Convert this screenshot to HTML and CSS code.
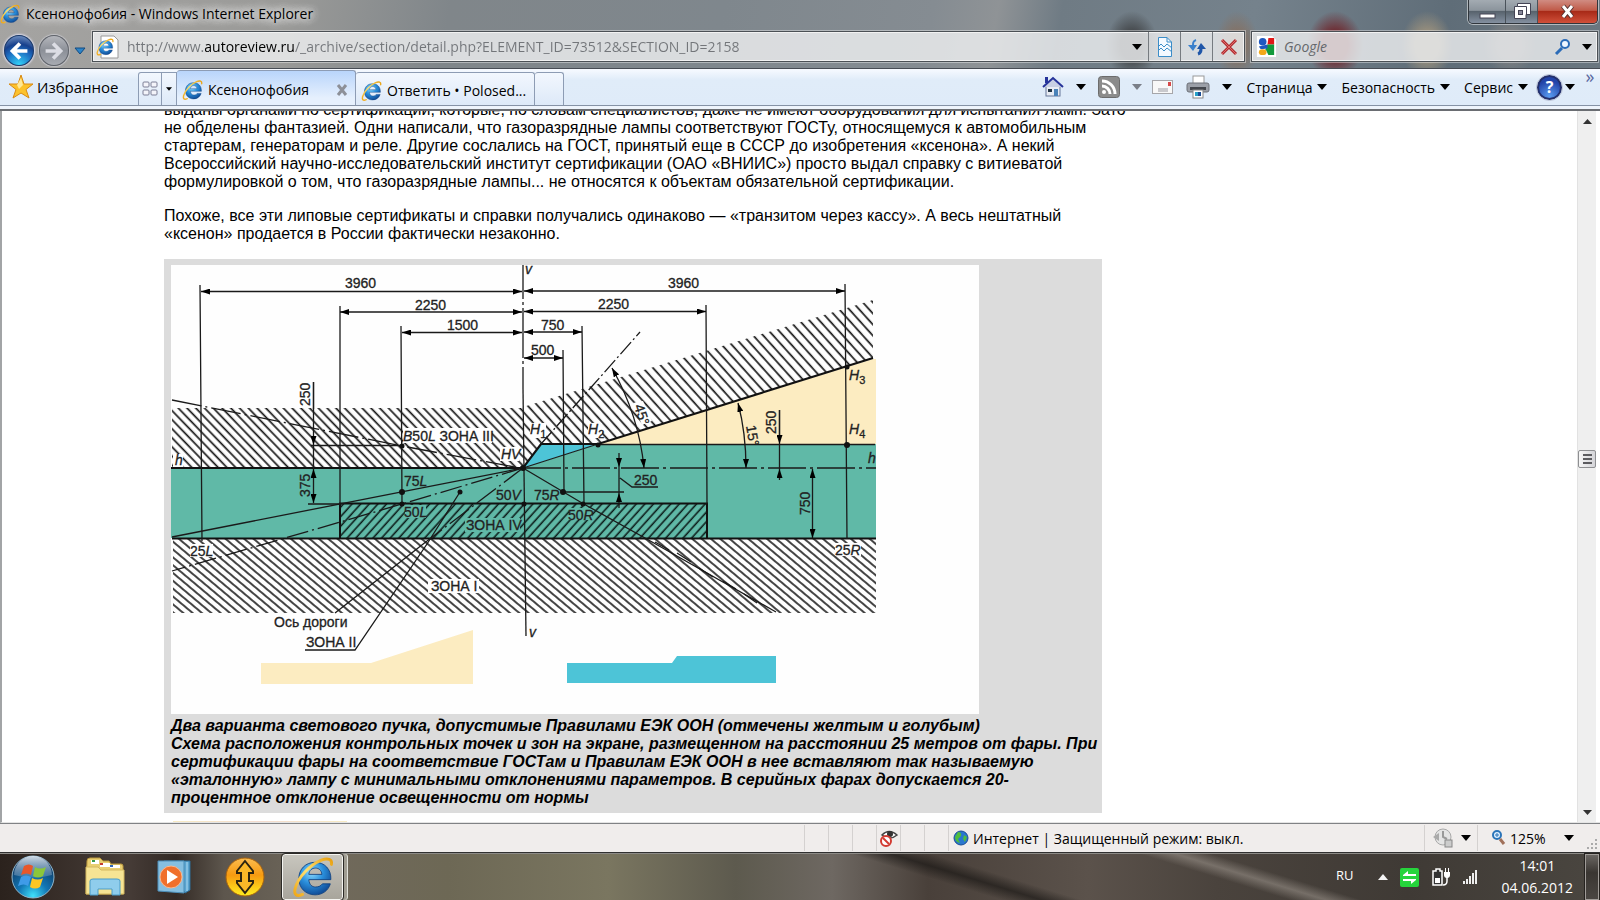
FILE: index.html
```html
<!DOCTYPE html>
<html lang="ru">
<head>
  <meta charset="UTF-8">
  <title>Ксенонофобия</title>
  <link rel="stylesheet" href="styles.css">
</head>
<body>
  <!-- shared icons -->
  <svg class="defs" aria-hidden="true">
    <defs>
      <radialGradient id="ieBlue" cx="0.4" cy="0.3" r="0.8">
        <stop offset="0" stop-color="#8fdcff"/>
        <stop offset="0.45" stop-color="#2a8fdc"/>
        <stop offset="1" stop-color="#0b3c86"/>
      </radialGradient>
      <linearGradient id="ieGold" x1="0" y1="1" x2="1" y2="0">
        <stop offset="0" stop-color="#f0a818"/>
        <stop offset="0.5" stop-color="#ffe070"/>
        <stop offset="1" stop-color="#e8a010"/>
      </linearGradient>
      <symbol id="ie" viewBox="0 0 40 40">
        <path fill="url(#ieBlue)" stroke="#0d3f80" stroke-width="0.8" d="M37 22.500 H16 C16.500 27.500 19 29.500 22.500 29.500 C25.500 29.500 27.500 28.500 29 26.500 H36.500 C34.500 33 29 37 22 37 C13 37 6.500 30.500 6.500 21.500 C6.500 12.500 13 6 22 6 C31 6 37.500 12.500 37 22.500 Z M16 17.500 H28.500 C28 13.500 25.500 11.500 22.300 11.500 C19 11.500 16.500 13.500 16 17.500 Z"/>
        <path fill="none" stroke="url(#ieGold)" stroke-width="2.800" stroke-linecap="round" d="M37.500 8 C38.500 3 34 1.500 28 4 C17 8.500 6 20 3 31 C1.500 37 4.500 39 10 36.500"/>
      </symbol>
      <symbol id="down" viewBox="0 0 10 6"><path fill="currentColor" d="M0 0 H10 L5 6 Z"/></symbol>
    </defs>
  </svg>

  <header class="glass">
    <div class="titlebar">
      <svg class="icon-18"><use href="#ie"/></svg>
      <h1>Ксенонофобия - Windows Internet Explorer</h1>
      <div class="window-buttons">
        <button aria-label="Свернуть"><svg width="36" height="23"><rect x="11" y="14" width="15" height="4" fill="#fff" stroke="#445" /></svg></button>
        <button aria-label="Восстановить"><svg width="31" height="23"><path d="M11.500 3.500 H24.500 V14.500 H20 V18.500 H8.500 V6.500 H11.500 Z" fill="#fff" stroke="#445"/><path d="M11.500 6.500 H20.500 V14.500" fill="none" stroke="#445"/><rect x="12.500" y="10.500" width="4" height="4" fill="#889" stroke="#445"/></svg></button>
        <button class="close" aria-label="Закрыть"><svg width="59" height="23"><path d="M25 6 L34 17 M34 6 L25 17" stroke="#533" stroke-width="5"/><path d="M25 6 L34 17 M34 6 L25 17" stroke="#fff" stroke-width="3"/></svg></button>
      </div>
    </div>

    <div class="address-row">
      <div class="nav">
        <button class="nav-back" aria-label="Назад"><svg viewBox="0 0 30 30"><path d="M16 7 L8 15 L16 23 M8 15 H24" fill="none" stroke="#fff" stroke-width="4"/></svg></button>
        <button class="nav-forward" aria-label="Вперед"><svg viewBox="0 0 30 30"><path d="M14 7 L22 15 L14 23 M22 15 H6" fill="none" stroke="#dcdde4" stroke-width="4"/></svg></button>
        <button class="nav-list" aria-label="Последние страницы"><svg width="12" height="8"><path d="M1 1 H11 L6 7 Z" fill="#2d84c8" stroke="#124a80"/></svg></button>
      </div>
      <form class="address">
        <svg class="page-icon" viewBox="0 0 24 24"><path d="M5 1 H18 L22 5 V23 H5 Z" fill="#fff" stroke="#999"/><use href="#ie" x="0" y="3" width="18" height="18"/></svg>
        <input class="url" type="text" aria-label="Адрес" value="http://www.autoreview.ru/_archive/section/detail.php?ELEMENT_ID=73512&amp;SECTION_ID=2158">
        <button type="button" class="plain" aria-label="Показать адреса"><svg class="tri"><use href="#down"/></svg></button>
        <button type="button" aria-label="Режим совместимости"><svg width="18" height="22"><path d="M2.500 1.500 H11 L15.500 6 V20.500 H2.500 Z" fill="#f4f9ff" stroke="#3b8dc8"/><path d="M11 1.500 V6 H15.500" fill="none" stroke="#3b8dc8"/><path d="M2 11 L5 8 L8 11 L11 8 L16 12" fill="none" stroke="#3b8dc8"/><path d="M2 15 L5 12 L8 15 L11 12 L16 16" fill="none" stroke="#3b8dc8"/></svg></button>
        <button type="button" aria-label="Обновить"><svg width="18" height="20"><path d="M8 3 C5 4 5 6 5 9" fill="none" stroke="#3a80cc" stroke-width="2"/><path d="M0 8 H9 L5 14 Z" fill="#3a80cc"/><path d="M10 17 C13 16 13 14 13 11" fill="none" stroke="#1f56a8" stroke-width="3"/><path d="M9 12 H18 L13 6 Z" fill="#1f56a8"/></svg></button>
        <button type="button" aria-label="Остановить"><svg width="18" height="18"><path d="M2 2 L16 16 M16 2 L2 16" stroke="#b22c30" stroke-width="3"/><path d="M2 2 L16 16 M16 2 L2 16" stroke="#de6a68"/></svg></button>
      </form>
      <form class="search">
        <svg class="google" viewBox="0 0 22 22"><path d="M1 0 H17 L21 4 V22 H1 Z" fill="#fff"/><path d="M13 2 H19 V9 H12 Z" fill="#e01818"/><path d="M12 9 H19 V20 H13 L10 14 Z" fill="#129a3c"/><circle cx="7" cy="6" r="4" fill="#1d57c0"/><path d="M3 11 L12 9 V13 L5 14 Z" fill="#1d57c0"/><ellipse cx="7" cy="17" rx="4" ry="3" fill="#f2a818"/></svg>
        <input type="text" aria-label="Поиск" placeholder="Google">
        <button type="button" class="plain" aria-label="Искать"><svg width="18" height="18"><circle cx="11" cy="6" r="4" fill="#eef6ff" stroke="#2b6cb8" stroke-width="2"/><path d="M8 10 L2 16" stroke="#2b6cb8" stroke-width="3"/></svg></button>
        <button type="button" class="plain" aria-label="Поставщики поиска"><svg class="tri"><use href="#down"/></svg></button>
      </form>
    </div>
  </header>

  <div class="toolbar">
    <button class="favorites">
      <svg width="26" height="26"><path d="M13 1 L16 10 L25 10 L18 15.500 L21 24 L13 19 L5 24 L8 15.500 L1 10 L10 10 Z" fill="#fcc22c" stroke="#d88a14"/><path d="M13 4 L15 11 L11 15 L9 11 Z" fill="#ffe898"/></svg>
      Избранное
    </button>
    <nav class="tabs">
      <button class="quick" aria-label="Быстрые вкладки"><svg width="16" height="16" fill="#f4f4fa" stroke="#7c7f96"><rect x="1" y="1" width="6" height="5" rx="1"/><rect x="9" y="1" width="6" height="5" rx="1"/><rect x="1" y="9" width="6" height="5" rx="1"/><rect x="9" y="9" width="6" height="5" rx="1"/></svg></button>
      <button class="quick-list" aria-label="Список вкладок"><svg width="6" height="4"><use href="#down"/></svg></button>
      <a class="tab active" href="#article"><svg class="icon-20"><use href="#ie"/></svg><span>Ксенонофобия</span><svg class="tab-close" width="12" height="12"><path d="M2 1 L10 11 M10 1 L2 11" stroke="#8d9098" stroke-width="3"/></svg></a>
      <a class="tab" href="#reply"><svg class="icon-20"><use href="#ie"/></svg><span>Ответить • Polosed...</span></a>
      <a class="tab new" href="#new" aria-label="Новая вкладка"></a>
    </nav>
    <div class="commands">
      <button aria-label="Домой"><svg width="22" height="22"><rect x="4" y="10" width="14" height="10" fill="#e8ecf4" stroke="#667799"/><path d="M1 11 L11 2 L21 11" fill="#c8d0e4" stroke="#26339a" stroke-width="2"/><rect x="3" y="1" width="3" height="6" fill="#26339a"/><rect x="6" y="13" width="4" height="3" fill="#234"/><rect x="12" y="13" width="4" height="7" fill="#4a82b8"/></svg></button>
      <button aria-label="Меню домашней страницы"><svg class="tri"><use href="#down"/></svg></button>
      <button aria-label="Каналы"><svg width="22" height="22"><rect x="0.500" y="0.500" width="21" height="21" rx="3" fill="#8b8b8b" stroke="#6c6c6c"/><circle cx="6" cy="16" r="2" fill="#fff"/><path d="M4 10 A8 8 0 0 1 12 18 M4 5 A13 13 0 0 1 17 18" fill="none" stroke="#fff" stroke-width="3"/></svg></button>
      <button class="off" aria-label="Меню каналов"><svg class="tri"><use href="#down"/></svg></button>
      <button aria-label="Почта"><svg class="mail" width="22" height="15"><rect x="0.500" y="0.500" width="20" height="13" fill="#f8f8f8" stroke="#a6a6aa"/><rect x="16" y="2" width="3" height="4" fill="#d84848"/><path d="M6 9 H16 M6 11 H16" stroke="#9a9aa2"/></svg></button>
      <button aria-label="Печать"><svg width="24" height="24"><rect x="7" y="1" width="11" height="9" fill="#fff" stroke="#999"/><rect x="1" y="8" width="22" height="9" rx="2" fill="#9ca0a8" stroke="#6c7078"/><rect x="4" y="12" width="16" height="3" fill="#44474d"/><rect x="7" y="15" width="10" height="8" fill="#fff" stroke="#888"/><rect x="9" y="17" width="3" height="4" fill="#27a0c8"/><rect x="12" y="17" width="3" height="4" fill="#1a4c94"/></svg></button>
      <button aria-label="Меню печати"><svg class="tri"><use href="#down"/></svg></button>
      <button class="menu">Страница<svg class="tri"><use href="#down"/></svg></button>
      <button class="menu">Безопасность<svg class="tri"><use href="#down"/></svg></button>
      <button class="menu">Сервис<svg class="tri"><use href="#down"/></svg></button>
      <button class="help" aria-label="Справка"><span class="help-mark">?</span><svg class="tri"><use href="#down"/></svg></button>
      <button class="more" aria-label="Еще">»</button>
    </div>
  </div>
  <div class="edge"></div>

  <div class="view">
    <main id="article">
      <p>выданы органами по сертификации, которые, по словам специалистов, даже не имеют оборудования для испытания ламп! Зато<br>
      не обделены фантазией. Одни написали, что газоразрядные лампы соответствуют ГОСТу, относящемуся к автомобильным<br>
      стартерам, генераторам и реле. Другие сослались на ГОСТ, принятый еще в СССР до изобретения «ксенона». А некий<br>
      Всероссийский научно-исследовательский институт сертификации (ОАО «ВНИИС») просто выдал справку с витиеватой<br>
      формулировкой о том, что газоразрядные лампы... не относятся к объектам обязательной сертификации.</p>
      <p>Похоже, все эти липовые сертификаты и справки получались одинаково — «транзитом через кассу». А весь нештатный<br>
      «ксенон» продается в России фактически незаконно.</p>

      <figure>
        <svg class="scheme" viewBox="171 264 808 449" role="img" aria-label="Схема светового пучка">
          <defs>
            <marker id="arrow" viewBox="0 0 9 6" refX="9" refY="3" markerWidth="9" markerHeight="6" markerUnits="userSpaceOnUse" orient="auto-start-reverse"><path d="M0 0 L9 3 L0 6 Z"/></marker>
            <pattern id="hatch" width="6.300" height="20" patternUnits="userSpaceOnUse" patternTransform="rotate(-44)"><path d="M3 0 V20" stroke="#161616" stroke-width="1.700"/></pattern>
            <pattern id="hatchRight" width="7.400" height="20" patternUnits="userSpaceOnUse" patternTransform="rotate(-42)"><path d="M3 0 V20" stroke="#161616" stroke-width="1.700"/></pattern>
            <pattern id="hatchLow" width="6" height="20" patternUnits="userSpaceOnUse" patternTransform="rotate(-50)"><path d="M3 0 V20" stroke="#161616" stroke-width="1.600"/></pattern>
            <pattern id="hatchBack" width="6.400" height="20" patternUnits="userSpaceOnUse" patternTransform="rotate(42)"><path d="M3 0 V20" stroke="#0c1c1a" stroke-width="1.600"/></pattern>
          </defs>
          <rect x="171" y="264" width="808" height="449" fill="#fefefe"/>

          <!-- zones -->
          <path fill="#60b9a7" d="M171 467 H523 L598 443 H876 V537 H171 Z"/>
          <path fill="#fcecc1" d="M598 443 L873 358 H876 V443 Z"/>
          <path fill="#4dc4d7" d="M523 467 L541 443 H598 Z"/>
          <path fill="url(#hatch)" d="M172 407 H523 V467 H172 Z"/>
          <path fill="url(#hatchRight)" d="M523 406 L873 299 V357 L598 443 H541 L523 467 Z"/>
          <path fill="url(#hatchLow)" d="M173 538 H876 V612 H173 Z"/>
          <path fill="url(#hatchBack)" d="M340 502 H707 V538 H340 Z"/>

          <!-- gaps in the hatching under the labels -->
          <g fill="#fefefe">
            <path d="M403 427 H492 V442 H403 Z M500 446 H519 V460 H500 Z M173 453 H183 V466 H173 Z M190 543 H213 V556 H190 Z M835 542 H861 V555 H835 Z M428 578 H479 V592 H428 Z M530 422 H546 V437 H530 Z M588 422 H602 V437 H588 Z"/>
            <path d="M633 402 L643 400 L652 420 L642 424 Z"/>
          </g>
          <path fill="#60b9a7" d="M465 517 H520 V531 H465 Z M405 504 H426 V517 H405 Z M569 507 H592 V519 H569 Z"/>

          <g fill="none" stroke="#1a1a1a" stroke-width="1.300">
            <!-- heavy outlines -->
            <path stroke-width="2.200" stroke="#111" d="M171 467 H523 L541 443 H598 L873 357"/>
            <path stroke-width="2" stroke="#111" d="M172 537.500 H876 M340 538 V502.500 H707 V538"/>
            <path d="M598 443.500 H875 M523 467 L598 443"/>
            <path stroke-dasharray="38 4 3 4" d="M523 467 H876"/>
            <!-- verticals -->
            <path d="M200 284 L202 540 M340 305 V503 M401 325 L402 503 M582 325 L584 503 M563 349 L564 491 M706 304 L707 503 M845 283 L847 538"/>
            <path stroke-dasharray="34 3 3 3 50 3 3 3" d="M523 264 V388"/>
            <path d="M523 388 L526 635"/>
            <!-- dimensions -->
            <g marker-start="url(#arrow)" marker-end="url(#arrow)">
              <path d="M201 290.500 H522"/><path d="M340 311 H522"/><path d="M402 331.500 H522"/>
              <path d="M524 290 H845"/><path d="M524 310.500 H706"/><path d="M524 331 H582"/><path d="M524 357 H563"/>
              <path d="M313.500 468 V502"/><path d="M812.500 468 V537"/>
              <path d="M612 367 Q639 415 644 467"/><path d="M738 402 Q746 432 746 467"/>
            </g>
            <g marker-end="url(#arrow)">
              <path d="M313.500 381 V444"/><path d="M779.500 409 V443"/><path d="M779.500 479 V468"/>
              <path d="M619 452 V466"/><path d="M619 507 V492"/>
            </g>
            <path d="M313.500 444 V468 M311 444.500 H402 M308 503 H340 M779.500 443 V468 M619 466 V492 M563 491 H624 M620 477 L632 486 H658"/>
            <path d="M313.500 381 V408 M779.500 409 V434"/>
            <!-- rays -->
            <path stroke-dasharray="30 4 2 4" d="M172 399 L402 445 L520 467"/>
            <path d="M523 467 L172 536"/>
            <path stroke-dasharray="22 4 2 4" d="M523 467 L402 503 L172 570"/>
            <path stroke-dasharray="24 4 2 4" d="M523 467 L427 540"/>
            <path d="M427 540 L335 612"/>
            <path d="M460 491 L427 543 L355 649 H305"/>
            <path d="M523 467 L582 502 L645 537 L776 611"/>
            <path d="M655 541 L669 549 M677 552 L691 561 M699 567 L713 576 M723 580 L736 588 M744 593 L757 602"/>
            <path stroke-dasharray="16 3 2 3" d="M541 443 L640 331"/>
          </g>
          <g fill="#111">
            <circle cx="523" cy="467" r="3"/><circle cx="402" cy="445" r="2.500"/><circle cx="402" cy="491" r="3"/><circle cx="402" cy="503" r="2.500"/>
            <circle cx="460" cy="491" r="2.500"/><circle cx="563" cy="491" r="3"/><circle cx="583" cy="503" r="2.500"/><circle cx="524" cy="503" r="2.500"/>
            <circle cx="598" cy="444" r="2.500"/><circle cx="847" cy="366" r="2.500"/><circle cx="847" cy="444" r="3"/>
          </g>

          <!-- captions -->
          <g class="numbers">
            <text x="345" y="287">3960</text><text x="415" y="309">2250</text><text x="447" y="329">1500</text>
            <text x="668" y="287">3960</text><text x="598" y="308">2250</text><text x="541" y="329">750</text><text x="531" y="354">500</text>
            <text x="634" y="484">250</text>
            <text transform="translate(310 405) rotate(-90)">250</text>
            <text transform="translate(310 496) rotate(-90)">375</text>
            <text transform="translate(776 433) rotate(-90)">250</text>
            <text transform="translate(810 514) rotate(-90)">750</text>
            <text transform="translate(634 405) rotate(72)">45°</text>
            <text transform="translate(746 425) rotate(80)">15°</text>
            <text x="403" y="440"><tspan class="it">B</tspan>50<tspan class="it">L</tspan> ЗОНА III</text>
            <text x="404" y="485">75<tspan class="it">L</tspan></text>
            <text x="404" y="516">50<tspan class="it">L</tspan></text>
            <text x="496" y="499">50<tspan class="it">V</tspan></text>
            <text x="534" y="499">75<tspan class="it">R</tspan></text>
            <text x="568" y="519">50<tspan class="it">R</tspan></text>
            <text x="190" y="555">25<tspan class="it">L</tspan></text>
            <text x="835" y="554">25<tspan class="it">R</tspan></text>
            <text x="466" y="529">ЗОНА IV</text>
            <text x="431" y="590">ЗОНА I</text>
            <text x="274" y="626">Ось дороги</text>
            <text x="306" y="646">ЗОНА II</text>
          </g>
          <g class="numbers it">
            <text x="525" y="273">v</text><text x="529" y="636">v</text>
            <text x="175" y="464">h</text><text x="868" y="462">h</text>
            <text x="501" y="458">HV</text>
            <text x="530" y="433">H<tspan class="sub" dy="4">1</tspan></text>
            <text x="588" y="433">H<tspan class="sub" dy="4">2</tspan></text>
            <text x="849" y="379">H<tspan class="sub" dy="4">3</tspan></text>
            <text x="849" y="433">H<tspan class="sub" dy="4">4</tspan></text>
          </g>

          <!-- the two beam shapes -->
          <path fill="#fcecc1" d="M261 662 H371 L473 629 V683 H261 Z"/>
          <path fill="#4dc4d7" d="M567 662 H672 L677 655 H776 V682 H567 Z"/>
        </svg>
        <figcaption>Два варианта светового пучка, допустимые Правилами ЕЭК ООН (отмечены желтым и голубым)<br>
        Схема расположения контрольных точек и зон на экране, размещенном на расстоянии 25 метров от фары. При<br>
        сертификации фары на соответствие ГОСТам и Правилам ЕЭК ООН в нее вставляют так называемую<br>
        «эталонную» лампу с минимальными отклонениями параметров. В серийных фарах допускается 20-<br>
        процентное отклонение освещенности от нормы</figcaption>
      </figure>
      <div class="next-picture"></div>
    </main>

    <div class="scrollbar">
      <button aria-label="Вверх"><svg width="9" height="5"><path d="M0 5 H9 L4.500 0 Z" fill="#333"/></svg></button>
      <div class="before"></div>
      <div class="thumb"><i></i><i></i><i></i></div>
      <div class="after"></div>
      <button aria-label="Вниз"><svg width="9" height="5"><path d="M0 0 H9 L4.500 5 Z" fill="#333"/></svg></button>
    </div>
  </div>

  <footer class="status">
    <div class="cell"></div>
    <div class="cell"></div>
    <div class="cell"></div>
    <div class="cell"><svg width="18" height="18"><path d="M2 6 Q9 -1 17 6 Q10 12 2 6 Z" fill="#fff" stroke="#444" stroke-width="1.500"/><circle cx="10" cy="5" r="3" fill="#333"/><circle cx="6" cy="12" r="5" fill="#fff" stroke="#d23b32" stroke-width="2"/><path d="M3 9 L9 15" stroke="#d23b32" stroke-width="2"/></svg></div>
    <div class="cell"></div>
    <div class="cell"></div>
    <div class="cell zone"><svg width="16" height="16"><circle cx="8" cy="8" r="7" fill="#2a77cf" stroke="#1b4e94"/><path d="M5 2 Q9 2 8 6 L5 9 L7 13 Q2 12 2 7 Z M11 5 L14 7 L12 12 L10 9 Z" fill="#4fbd3d"/></svg>Интернет | Защищенный режим: выкл.</div>
    <div class="cell safe"><svg width="20" height="20"><circle cx="10" cy="9" r="8" fill="#e4e4e4" stroke="#a8a8a8"/><path d="M10 3 V9 L14 11" fill="none" stroke="#999" stroke-width="2"/><path d="M0 9 L6 5 V13 Z" fill="#aaa"/><rect x="12" y="12" width="7" height="7" fill="#ccc" stroke="#888"/></svg><svg class="tri"><use href="#down"/></svg></div>
    <button class="cell zoom"><svg width="14" height="16"><circle cx="5" cy="5" r="4" fill="#dff0ff" stroke="#2a74b8" stroke-width="2"/><path d="M3 5 H7 M5 3 V7" stroke="#2a74b8"/><path d="M8 9 L12 14" stroke="#a0705a" stroke-width="3"/></svg><span>125%</span><svg class="tri"><use href="#down"/></svg></button>
    <svg class="grip" width="12" height="12" fill="#aaa"><path d="M9 0h2v2h-2z M9 4h2v2h-2z M5 4h2v2h-2z M9 8h2v2h-2z M5 8h2v2h-2z M1 8h2v2h-2z"/></svg>
  </footer>

  <footer class="taskbar">
    <button class="start" aria-label="Пуск">
      <svg width="44" height="44">
        <defs>
          <radialGradient id="orb" cx="0.5" cy="0.95" r="0.9"><stop offset="0" stop-color="#3fe0fa"/><stop offset="0.4" stop-color="#1276b4"/><stop offset="1" stop-color="#0e2f56"/></radialGradient>
          <linearGradient id="gloss" x1="0" y1="0" x2="0" y2="1"><stop offset="0" stop-color="#e6f0f8" stop-opacity="0.9"/><stop offset="1" stop-color="#7fa0c0" stop-opacity="0.4"/></linearGradient>
        </defs>
        <circle cx="22" cy="22" r="21" fill="url(#orb)" stroke="#8fb6cc"/>
        <path d="M3 20 A19 19 0 0 1 41 20 Q22 25 3 20 Z" fill="url(#gloss)"/>
        <path d="M13 11 Q18 8 22 11 L20 20 Q16 17 10 20 Z" fill="#e8572a"/>
        <path d="M24 12 Q29 15 35 12 L32 21 Q27 24 22 21 Z" fill="#8cc63a"/>
        <path d="M10 22 Q15 19 20 22 L17 31 Q13 28 7 31 Z" fill="#3f9be8"/>
        <path d="M21 23 Q27 26 32 23 L29 32 Q24 35 19 32 Z" fill="#fcc624"/>
      </svg>
    </button>
    <button class="task" aria-label="Проводник">
      <svg width="40" height="40">
        <path d="M2 4 Q2 1 5 1 H15 L18 4 H24 L26 7 H36 Q38 7 38 9 V37 H1 Z" fill="#e9cf72" stroke="#b8963c"/>
        <path d="M6 3 h8 v4 h-8z M15 6 h10 v4 h-10z M25 8 h10 v3 h-10z" fill="#fff"/>
        <path d="M7 3h3v2h-3z" fill="#3a9c4a"/><path d="M15 6h3v2h-3z" fill="#c43c30"/><path d="M25 8h3v2h-3z" fill="#3068b8"/>
        <path d="M1 10 H13 L16 13 H39 V37 H1 Z" fill="#f6e494" stroke="#d4b860"/>
        <path d="M5 24 Q5 22 8 22 H32 Q35 22 35 24 V38 H27 V32 H13 V38 H5 Z" fill="#8fcdec" stroke="#4a9cc8"/>
      </svg>
    </button>
    <button class="task" aria-label="Проигрыватель">
      <svg width="36" height="36">
        <path d="M7 2 L33 2 V31 L28 34 Z" fill="#5ba4cf" stroke="#2f719c"/>
        <path d="M30 3 V32" stroke="#b0dcf4"/>
        <path d="M1 2 H27 V34 L1 32 Z" fill="#86bfe0" stroke="#4c8eb8"/>
        <circle cx="14" cy="18" r="11" fill="#f0702c" stroke="#f8b890"/>
        <path d="M10 11 L21 18 L10 25 Z" fill="#fff"/>
      </svg>
    </button>
    <button class="task" aria-label="Передача файлов">
      <svg width="40" height="40">
        <defs><linearGradient id="amber" x1="0" y1="0" x2="0" y2="1"><stop offset="0" stop-color="#fbbd50"/><stop offset="0.450" stop-color="#f79a10"/><stop offset="1" stop-color="#ffee20"/></linearGradient></defs>
        <circle cx="20" cy="20" r="19" fill="url(#amber)" stroke="#a86410"/>
        <path d="M20 4 L28 14 V16 H24 V24 H28 V26 L20 36 L12 26 V24 H16 V16 H12 V14 Z" fill="#fbb828" stroke="#2c2410" stroke-width="2"/>
      </svg>
    </button>
    <button class="task running" aria-label="Internet Explorer"><svg width="42" height="42"><use href="#ie"/></svg></button>
    <div class="tray">
      <span class="lang">RU</span>
      <svg width="10" height="6"><path d="M0 6 H10 L5 0 Z" fill="#f4f4f4"/></svg>
      <svg width="19" height="19"><rect width="19" height="19" rx="2" fill="#26d43c"/><path d="M3 7 L8 3 V6 H16 V8 H3 Z M16 12 L11 16 V13 H3 V11 H16 Z" fill="#fff"/></svg>
      <svg width="20" height="20"><path d="M2 4 H5 V2 H9 V4 H11 V18 H2 Z" fill="#333" stroke="#fff" stroke-width="1.500"/><path d="M4 11 H9 V16 H4 Z" fill="#fff"/><path d="M16 10 V14 Q16 18 12 18" fill="none" stroke="#fff" stroke-width="1.500"/><path d="M14.500 1 V5 M17.500 1 V5" stroke="#fff"/><path d="M13 5 H19 V8 Q19 11 16 11 Q13 11 13 8 Z" fill="#fff"/></svg>
      <svg width="16" height="16" fill="#eee"><path d="M0 12h2v3h-2z M3 10h2v5h-2z M6 7h2v8h-2z M9 4h2v11h-2z M12 1h2v14h-2z"/></svg>
      <div class="clock"><time>14:01</time><span>04.06.2012</span></div>
    </div>
    <button class="show-desktop" aria-label="Свернуть все окна"></button>
  </footer>
</body>
</html>
```
FILE: styles.css
```css
* {
  box-sizing: border-box;
}

body {
  margin: 0;
  height: 100vh;
  display: flex;
  flex-direction: column;
  overflow: hidden;
  font-family: "Open Sans", "Noto Sans", sans-serif;
  font-size: 14px;
  color: #000;
  background: #fff;
}

button {
  font: inherit;
  color: inherit;
  padding: 0;
  border: none;
  background: none;
  display: flex;
  align-items: center;
  justify-content: center;
}

svg {
  display: block;
  flex: none;
}

.defs {
  position: absolute;
  width: 0;
  height: 0;
}

.tri { width: 10px; height: 6px; }
.icon-18 { width: 20px; height: 20px; }
.icon-20 { width: 21px; height: 22px; }

/* window frame, with the desktop icons showing through the glass */
.glass {
  height: 69px;
  border-bottom: 1px solid #474c54;
  background:
    radial-gradient(ellipse 26px 34px at 1132px 45px, rgba(60, 62, 64, 0.75) 45%, transparent),
    radial-gradient(ellipse 22px 34px at 1237px 45px, rgba(135, 110, 92, 0.8) 35%, transparent),
    radial-gradient(ellipse 28px 34px at 1335px 45px, rgba(110, 38, 44, 0.85) 45%, transparent),
    radial-gradient(ellipse 26px 34px at 1427px 45px, rgba(155, 145, 125, 0.85) 45%, transparent),
    radial-gradient(ellipse 26px 30px at 1510px 45px, rgba(140, 135, 132, 0.6) 45%, transparent),
    linear-gradient(100deg, #a5a4a2 0, #9a9a98 18%, #80868a 28%, #7f878d 45%, #858c92 58%, #8f9396 62%, #6f7b84 66%, #75828c 78%, #5f6d78 90%, #6b7780 100%);
}

.titlebar {
  height: 31px;
  display: flex;
  align-items: flex-start;
  gap: 6px;
}

.titlebar > svg {
  margin-top: 4px;
}

.titlebar h1 {
  flex: 1;
  margin: 4px 0 0;
  font-size: 14px;
  line-height: 20px;
  font-weight: normal;
  text-shadow: 0 0 6px #ddd, 0 0 8px #ddd, 0 0 10px #ddd, 0 0 12px #ddd;
}

.window-buttons {
  display: flex;
  margin-right: 2px;
  border: 1px solid #30363c;
  border-top: none;
  border-radius: 0 0 5px 5px;
  box-shadow: 0 0 0 1px rgba(255, 255, 255, 0.5);
  overflow: hidden;
}

.window-buttons button {
  border-right: 1px solid #4a525a;
  background: linear-gradient(#a3abb2 0, #8b949c 45%, #58636d 50%, #8490a0 100%);
}

.window-buttons .close {
  border-right: none;
  background: linear-gradient(#d08c82 0, #c05a48 45%, #a82a18 50%, #d0503a 100%);
}

.address-row {
  display: flex;
  align-items: center;
  height: 31px;
  padding-right: 2px;
  gap: 6px;
}

.nav {
  display: flex;
  align-items: center;
  gap: 5px;
  width: 86px;
  padding-left: 4px;
  padding-top: 8px;
}

.nav-back,
.nav-forward {
  width: 31px;
  height: 31px;
  border-radius: 50%;
}

.nav-back {
  border: 1px solid #1a3a6c;
  background: radial-gradient(circle at 50% 100%, #34d4fa 0, #1c6cc0 45%, #17408c 65%, #8ba8d0 100%);
  box-shadow: 0 0 2px 1px #dde;
}

.nav-forward {
  border: 1px solid #60646c;
  background: linear-gradient(#b4b6bc, #8c9098 50%, #a8abb2);
  box-shadow: 0 0 1px 1px #c4c4c8;
}

.address,
.search {
  display: flex;
  align-items: stretch;
  height: 31px;
  border: 1px solid #4b5055;
  outline: 1px solid rgba(255, 255, 255, 0.4);
  background: rgba(240, 241, 242, 0.8);
  box-shadow: inset 0 0 0 1px #f2f2f2;
}

.address {
  flex: 1;
}

.search {
  width: 347px;
}

.address input,
.search input {
  flex: 1;
  min-width: 0;
  border: none;
  padding: 0;
  background: none;
  font: inherit;
  outline: none;
}

/* host name is darker than the rest of the address */
.address .url {
  color: transparent;
  background: linear-gradient(90deg, #73767a 78px, #000 78px, #000 168px, #73767a 168px);
  -webkit-background-clip: text;
  background-clip: text;
}

.search input::placeholder {
  color: #65686c;
  font-style: italic;
  opacity: 1;
}

.page-icon {
  width: 24px;
  height: 24px;
  margin: 3px 7px 0 3px;
}

.google {
  width: 21px;
  height: 23px;
  margin: 3px 7px 0 4px;
}

.address button {
  width: 32px;
  border-left: 1px solid #767b80;
}

.address .plain {
  width: 22px;
  border-left: none;
}

.search .plain {
  width: 28px;
}

.search .plain:last-child {
  width: 20px;
}

/* favorites, tabs, commands */
.toolbar {
  display: flex;
  height: 37px;
  border-bottom: 1px solid #8592a6;
  background: linear-gradient(#f7faff 0, #e0ecf9 30%, #dfebf9 100%);
}

.favorites {
  width: 138px;
  padding-left: 8px;
  gap: 3px;
  justify-content: flex-start;
  font-size: 15px;
}

.tabs {
  display: flex;
  align-items: flex-end;
}

.quick,
.quick-list,
.tab {
  height: 33px;
  border: 1px solid #8d9cb4;
  border-bottom: none;
  background: linear-gradient(#f2f7fe, #dde9f8);
}

.quick {
  width: 24px;
  border-radius: 3px 0 0 0;
}

.quick-list {
  width: 15px;
  border-left: none;
}

.tab {
  display: flex;
  align-items: center;
  gap: 5px;
  width: 179px;
  padding: 3px 5px 0;
  border-left: none;
  border-radius: 3px 3px 0 0;
  color: #000;
  text-decoration: none;
}

.tab span {
  flex: 1;
  white-space: nowrap;
}

.tab.active {
  height: 35px;
  background: linear-gradient(#b9d5fb, #e6f0fd 80%);
}

.tab.active .tab-close {
  margin-right: 2px;
}

.tab.new {
  width: 29px;
}

.commands {
  flex: 1;
  display: flex;
  align-items: center;
  justify-content: flex-end;
  gap: 12px;
  padding-right: 4px;
}

.commands .off {
  color: #7a7f88;
}

.mail {
  margin-left: -2px;
}

.menu {
  gap: 5px;
  margin-left: 2px;
}

.help {
  gap: 3px;
  margin-left: -3px;
}

.help-mark {
  width: 25px;
  height: 25px;
  border: 2px solid #24306c;
  border-radius: 50%;
  outline: 1px solid #b8c0d4;
  background: radial-gradient(circle at 50% 90%, #5a9cf0, #2243a8 70%);
  color: #fff;
  font-weight: bold;
  font-size: 16px;
  line-height: 20px;
}

.more {
  align-self: flex-start;
  width: 12px;
  margin-left: -3px;
  color: #5a68a0;
  font-size: 18px;
  line-height: 14px;
}

.edge {
  height: 5px;
  background: #eef4fc;
  border-bottom: 2px solid #6a6d72;
}

/* page */
.view {
  flex: 1;
  min-height: 0;
  display: flex;
  overflow: hidden;
  border-left: 2px solid #a2a4a6;
  border-bottom: 1px solid #e4e4e4;
  padding-right: 4px;
}

main {
  flex: 1;
  overflow: hidden;
  padding-left: 162px;
  font-family: "Liberation Sans", Arial, sans-serif;
  font-size: 16px;
  line-height: 18px;
  white-space: nowrap;
}

main p {
  margin: 0 0 16px;
}

main p:first-child {
  margin-top: -10px;
}

figure {
  max-width: 938px;
  margin: 0 0 8px;
  padding: 6px 7px;
  background: #dcdcdc;
}

.scheme {
  width: 808px;
  max-width: 100%;
  margin-bottom: 3px;
}

figcaption {
  font-weight: bold;
  font-style: italic;
}

.numbers {
  font-family: "Liberation Sans", Arial, sans-serif;
  font-size: 14px;
  fill: #222;
  stroke: #222;
  stroke-width: 0.3px;
}

.it {
  font-style: italic;
}

.sub {
  font-size: 11px;
  font-style: normal;
}

.next-picture {
  width: 174px;
  height: 2px;
  margin-left: 9px;
  background: linear-gradient(90deg, #f8ebc4, #f4dcd0 50%, #f8ebc4);
}

.scrollbar {
  width: 19px;
  display: flex;
  flex-direction: column;
  background: #efefef;
  border-left: 1px solid #e2e2e2;
}

.scrollbar button {
  height: 20px;
}

.before {
  flex: 319;
}

.after {
  flex: 334;
}

.thumb {
  height: 18px;
  display: flex;
  flex-direction: column;
  align-items: center;
  justify-content: center;
  gap: 2px;
  border: 1px solid #8e8f92;
  border-radius: 2px;
  background: linear-gradient(90deg, #f6f6f6, #d4d4d8);
}

.thumb i {
  width: 9px;
  height: 2px;
  background: #5c5c60;
}

/* status bar */
.status {
  height: 30px;
  display: flex;
  align-items: stretch;
  justify-content: flex-end;
  padding: 1px 2px 1px 0;
  border-top: 1px solid #808285;
  border-bottom: 1px solid #303030;
  background: #f0edec;
}

.cell {
  display: flex;
  align-items: center;
  width: 24px;
  padding-left: 3px;
  border-left: 1px solid #d4d1d0;
}

.zone {
  width: 476px;
  padding-left: 4px;
  gap: 4px;
}

.safe {
  width: 53px;
  gap: 8px;
  padding-left: 8px;
}

.zoom {
  width: 109px;
  padding-left: 14px;
  gap: 4px;
  justify-content: flex-start;
  border-left: 1px solid #d4d1d0;
}

.zoom .tri {
  margin-left: 14px;
}

.grip {
  align-self: flex-end;
}

/* taskbar */
.taskbar {
  height: 47px;
  display: flex;
  align-items: stretch;
  border-top: 1px solid #8c8a86;
  color: #fff;
  background:
    linear-gradient(197deg, transparent 0, transparent 44%, rgba(20, 18, 16, 0.6) 53%, transparent 62%) 830px 0 / 300px 100% no-repeat,
    linear-gradient(197deg, transparent 44%, rgba(150, 142, 134, 0.6) 52%, transparent 60%) 1110px 0 / 300px 100% no-repeat,
    linear-gradient(90deg, #2b221d 0, #463c37 8%, #332a25 11%, #5d564d 14%, #70695c 20%, #6d6855 28%, #7a7660 38%, #5d5a4e 46%, #6e6862 52%, #49403a 58%, #5b524b 68%, #4a433d 76%, #3f3a35 88%, #4a4640 100%);
}

.start {
  width: 44px;
  margin: 0 20px 0 11px;
}

.task {
  width: 60px;
  margin-right: 10px;
}

.running {
  width: 61px;
  margin-left: -3px;
  border: 1px solid #f4f4f0;
  border-radius: 3px;
  outline: 1px solid #2c2a26;
  background: linear-gradient(#c8c6be, #a8a59c);
  box-shadow: 4px 0 0 #a09d92, 5px 0 0 #e0e0d8;
}

.tray {
  flex: 1;
  display: flex;
  align-items: center;
  justify-content: flex-end;
  gap: 12px;
}

.lang {
  margin-right: 12px;
  font-size: 13px;
  line-height: 20px;
  margin-bottom: 5px;
}

.clock {
  display: flex;
  flex-direction: column;
  align-items: center;
  margin: 0 12px 0 11px;
  line-height: 22px;
}

.show-desktop {
  width: 14px;
  margin-right: 1px;
  border: 1px solid #a09c98;
  outline: 1px solid #25221f;
  background: linear-gradient(#6a6662, #3a3632 40%, #4a4642);
}
```
